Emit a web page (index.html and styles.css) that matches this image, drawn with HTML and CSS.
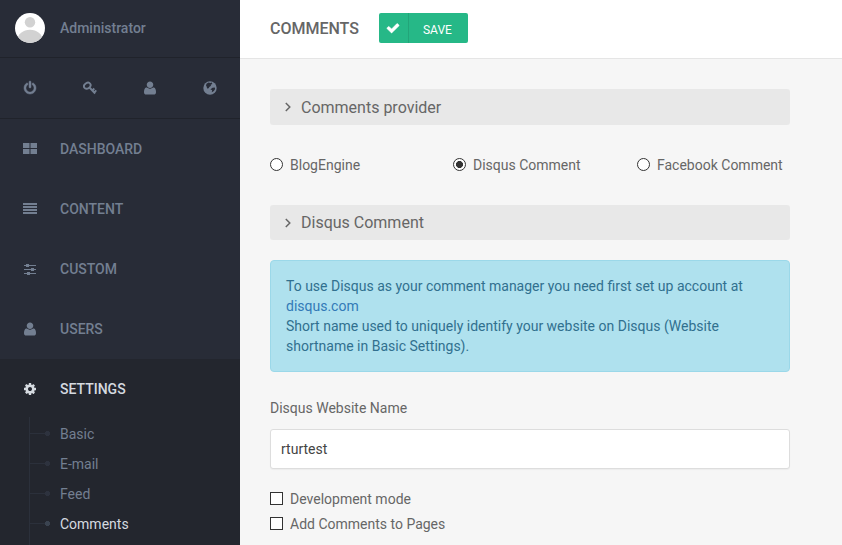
FILE: index.html
```html
<!DOCTYPE html>
<html lang="en">
<head>
<meta charset="utf-8">
<title>Comments</title>
<link rel="stylesheet" href="styles.css">
</head>
<body>
<svg class="sprite" aria-hidden="true">
  <symbol id="user" viewBox="0 70 1408 1643"><path d="M1408 1399q0 120-73 189.5t-194 69.5h-874q-121 0-194-69.5t-73-189.5q0-53 3.5-103.5t14-109 26.5-108.5 43-97.5 62-81 85.5-53.5 111.500-20q9 0 42 21.500t74.500 48 108 48 133.500 21.500 133.500-21.500 108-48 74.500-48 42-21.500q61 0 111.500 20t85.500 53.500 62 81 43 97.500 26.500 108.500 14 109 3.500 103.500zm-320-887q0 159-112.500 271.500t-271.500 112.500-271.500-112.500-112.500-271.500 112.500-271.500 271.500-112.500 271.500 112.500 112.500 271.500z"/></symbol>
</svg>
<div class="app">
  <aside class="sidebar">
    <div class="profile">
      <svg class="avatar" viewBox="0 0 30 30"><defs><clipPath id="round"><circle cx="15" cy="15" r="15"/></clipPath></defs><g clip-path="url(#round)"><path fill="#fff" d="M0 0h30v30H0z"/><circle cx="15" cy="9.300" r="5.200" fill="#d2d2d2"/><ellipse cx="15" cy="27" rx="12.500" ry="10.200" fill="#d2d2d2"/></g></svg>
      <span>Administrator</span>
    </div>
    <div class="shortcuts">
      <span><svg class="bold" width="12" height="14" viewBox="0 0 1536 1792"><path d="M1536 896q0 156-61 298t-164 245-245 164-298 61-298-61-245-164-164-245-61-298q0-182 80.500-343t226.500-270q43-32 95.500-25t83.500 50q32 42 24.500 94.500t-49.500 84.500q-98 74-151.500 181t-53.500 228q0 104 40.500 198.500t109.500 163.500 163.500 109.500 198.500 40.500 198.500-40.500 163.500-109.500 109.500-163.500 40.500-198.500q0-121-53.500-228t-151.500-181q-42-32-49.500-84.500t24.500-94.500q31-43 84-50t95 25q146 109 226.500 270t80.500 343zm-640-768v640q0 52-38 90t-90 38-90-38-38-90v-640q0-52 38-90t90-38 90 38 38 90z"/></svg></span>
      <span><svg width="14" height="14" viewBox="0 0 14 14"><g fill="none" stroke="currentColor" stroke-width="1.900"><ellipse cx="4.300" cy="4.700" rx="3.500" ry="2.700" transform="rotate(-35 4.300 4.700)"/><path d="M6.500 6.500l5.700 6M9.300 9.500l2-2M11.300 11.300l2-2"/></g></svg></span>
      <span><svg width="12" height="14"><use href="#user"/></svg></span>
      <span><svg width="14" height="14" viewBox="0 0 14 14"><circle cx="7" cy="7" r="6.700"/><path class="land" d="M3.500 2.800L5.600 1.500 7.200 2l1.600-.5.500 1.500-1.600.8.300 1-1.700 1.100-.6 1.300-1.600.2-.4-1.600L3 4.500zM7.300 8.400l2.200-1.600 2.300-.2.300 1.300-1.200 2-2.100 1.300.3-2.200z"/></svg></span>
    </div>
    <nav>
      <a class="item"><svg width="14" height="12" viewBox="0 0 14 12"><path d="M0 0h6.500v5H0zM7.500 0H14v5H7.500zM0 6h6.500v5H0zM7.500 6H14v5H7.500z"/></svg>DASHBOARD</a>
      <a class="item"><svg width="14" height="12" viewBox="0 0 14 12"><path d="M0 0h14v2H0zM0 3h14v2H0zM0 6h14v2H0zM0 9h14v2H0z"/></svg>CONTENT</a>
      <a class="item"><svg width="14" height="12" viewBox="0 0 14 12"><path d="M1 2h12v1H1zM1 6h12v1H1zM1 10h12v1H1zM3 1h3v3H3zM8 5h3v3H8zM4 9h3v3H4z"/></svg>CUSTOM</a>
      <a class="item"><svg width="14" height="14"><use href="#user"/></svg>USERS</a>
      <div class="open">
        <a class="item"><svg width="14" height="14" viewBox="-128 0 1792 1792"><path d="M1024 896q0-106-75-181t-181-75-181 75-75 181 75 181 181 75 181-75 75-181zm512-109v222q0 12-8 23t-20 13l-185 28q-19 54-39 91 35 50 107 138 10 12 10 25t-9 23q-27 37-99 108t-94 71q-12 0-26-9l-138-108q-44 23-91 38-16 136-29 186-7 28-36 28h-222q-14 0-24.500-8.500t-11.500-21.500l-28-184q-49-16-90-37l-141 107q-10 9-25 9-14 0-25-11-126-114-165-168-7-10-7-23 0-12 8-23 15-21 51-66.500t54-70.500q-27-50-41-99l-183-27q-13-2-21-12.500t-8-23.500v-222q0-12 8-23t19-13l186-28q14-46 39-92-40-57-107-138-10-12-10-24 0-10 9-23 26-36 98.500-107.500t94.500-71.500q13 0 26 10l138 107q44-23 91-38 16-136 29-186 7-28 36-28h222q14 0 24.500 8.500t11.500 21.500l28 184q49 16 90 37l142-107q9-9 24-9 13 0 25 10 129 119 165 170 7 8 7 22 0 12-8 23-15 21-51 66.500t-54 70.500q26 50 41 98l183 28q13 2 21 12.500t8 23.500z"/></svg>SETTINGS</a>
        <ul class="submenu">
          <li>Basic</li>
          <li>E-mail</li>
          <li>Feed</li>
          <li class="current">Comments</li>
        </ul>
      </div>
    </nav>
  </aside>
  <main>
    <header>
      <h1>COMMENTS</h1>
      <button class="save"><span class="tick"><svg class="bold" width="14" height="14" viewBox="0 0 1792 1792"><path d="M1671 566q0 40-28 68l-724 724-136 136q-28 28-68 28t-68-28l-136-136-362-362q-28-28-28-68t28-68l136-136q28-28 68-28t68 28l294 295 656-657q28-28 68-28t68 28l136 136q28 28 28 68z"/></svg></span><span class="text">SAVE</span></button>
    </header>
    <section class="content">
      <h2><svg width="6" height="10" viewBox="0 0 6 10"><path class="chevron" d="M.8 1l4 4-4 4"/></svg><span>Comments provider</span></h2>
      <div class="providers">
        <label><input type="radio" name="provider">BlogEngine</label>
        <label><input type="radio" name="provider" checked>Disqus Comment</label>
        <label><input type="radio" name="provider">Facebook Comment</label>
      </div>
      <h2 class="second"><svg width="6" height="10" viewBox="0 0 6 10"><path class="chevron" d="M.8 1l4 4-4 4"/></svg><span>Disqus Comment</span></h2>
      <div class="alert">To use Disqus as your comment manager you need first set up account at <a>disqus.com</a><br>Short name used to uniquely identify your website on Disqus (Website shortname in Basic Settings).</div>
      <label class="caption" for="site">Disqus Website Name</label>
      <input class="field" id="site" type="text" value="rturtest">
      <label class="check"><input type="checkbox">Development mode</label>
      <label class="check"><input type="checkbox">Add Comments to Pages</label>
    </section>
  </main>
</div>
</body>
</html>
```
FILE: styles.css
```css
* { box-sizing: border-box; }
body {
  margin: 0;
  font: 14px/20px Roboto, "Liberation Sans", sans-serif;
  color: #666;
  background: #f6f6f6;
}
svg { display: block; fill: currentColor; flex: none; }
.sprite { position: absolute; width: 0; height: 0; }
.bold { stroke: currentColor; stroke-width: 60; overflow: visible; }
.app { display: flex; height: 545px; overflow: hidden; }

.sidebar { width: 240px; flex: none; background: #282c37; color: #737f91; }
.profile {
  display: flex;
  align-items: center;
  gap: 15px;
  height: 58px;
  padding: 0 15px 2px;
  border-bottom: 1px solid #20232b;
  font-weight: 500;
}
.avatar { width: 30px; height: 30px; }
.shortcuts {
  display: grid;
  grid-template-columns: repeat(4, 1fr);
  height: 61px;
  border-bottom: 1px solid #20232b;
}
.shortcuts span { display: flex; align-items: center; justify-content: center; }
.land { fill: #282c37; }
.item {
  display: flex;
  align-items: center;
  gap: 23px;
  height: 60px;
  padding-left: 23px;
  font-weight: 500;
}
.open { background: #23262e; height: 190px; }
.open .item { color: #d5dae0; }
.submenu {
  margin: -2px 0 0 29px;
  padding: 0;
  list-style: none;
  border-left: 1px solid #2b303b;
  height: 140px;
}
.submenu li { display: flex; align-items: center; height: 30px; padding-top: 4px; }
.submenu li::before {
  content: "";
  width: 20px;
  height: 5px;
  margin: -1px 10px 0 0;
  background:
    radial-gradient(circle at 17.5px 2.5px, #2d323e 2.3px, transparent 2.8px),
    linear-gradient(#2b303b, #2b303b) 0 2px / 17px 1px no-repeat;
}
.submenu .current { color: #d5dae0; }
.submenu .current::before {
  background:
    radial-gradient(circle at 17.5px 2.5px, #3a4350 2.3px, transparent 2.8px),
    linear-gradient(#2b303b, #2b303b) 0 2px / 17px 1px no-repeat;
}

main { flex: 1; }
header {
  display: flex;
  align-items: center;
  gap: 20px;
  height: 59px;
  padding: 0 30px 2px;
  background: #fff;
  border-bottom: 1px solid #e5e5e5;
}
h1 { margin: 0; padding-top: 2px; font-size: 16px; font-weight: 500; }
.save {
  display: flex;
  align-items: center;
  width: 89px;
  height: 30px;
  padding: 0;
  border: 0;
  border-radius: 2px;
  background: #26b887;
  color: #fff;
  font: 12px/30px Roboto, sans-serif;
}
.tick {
  display: flex;
  align-items: center;
  justify-content: center;
  width: 30px;
  height: 30px;
  border-right: 1px solid #22a579;
}
.text { flex: 1; padding: 4px 2px 0 0; }

.content { width: 580px; padding: 30px; }
h2 {
  display: flex;
  align-items: center;
  gap: 10px;
  height: 36px;
  margin: 0;
  padding-left: 15px;
  border-radius: 3px;
  background: #e8e8e8;
  font-size: 16px;
  font-weight: 400;
}
h2 span { padding-top: 2px; }
.chevron { fill: none; stroke: currentColor; stroke-width: 1.5; }
.second { height: 35px; }
.second span { padding-top: 1px; }
.providers { display: grid; grid-template-columns: 183px 184px 1fr; height: 80px; padding-top: 30px; }
.providers label, .check { display: flex; align-items: flex-start; }
input[type="radio"], input[type="checkbox"] {
  appearance: none;
  width: 13px;
  height: 13px;
  margin: 3px 7px 0 0;
  border: 1px solid #333;
  background: #fff;
}
input[type="radio"] { border-radius: 50%; }
input[type="radio"]:checked { background: radial-gradient(circle, #333 3.2px, #fff 3.8px); }
.alert {
  height: 112px;
  margin-top: 20px;
  padding: 15px;
  border: 1px solid #9bd8e9;
  border-radius: 4px;
  background: #afe1ee;
  color: #31708f;
}
.alert a { color: #337ab7; }
.caption { display: block; margin: 26px 0 11px; }
.field {
  display: block;
  width: 520px;
  height: 40px;
  margin-bottom: 20px;
  padding: 0 10px;
  border: 1px solid #ddd;
  border-radius: 3px;
  box-shadow: 0 1px 1px #0000000a;
  background: #fff;
  color: #444;
  font: inherit;
}
.check { height: 25px; }
```
